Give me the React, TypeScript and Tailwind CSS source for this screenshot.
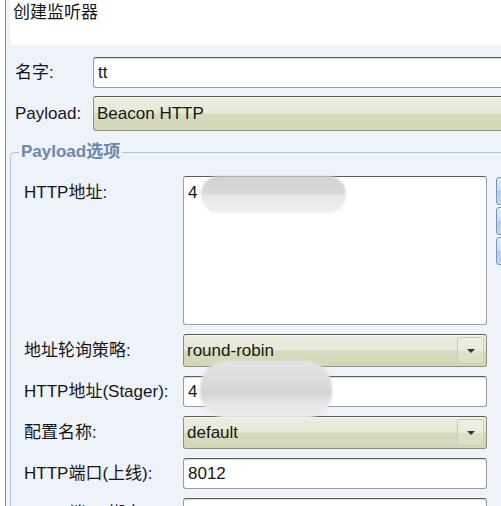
import React from "react";

const font = { fontFamily: '"Liberation Sans", "Noto Sans CJK SC", sans-serif' };

function TextBox({ value, className = "" }: { value: string; className?: string }) {
  return (
    <div
      className={`relative flex h-[31px] items-center rounded-[3px] border border-[#9a9a9a] border-t-[#5c5c5c] bg-white pl-[4px] shadow-[inset_0_1px_1px_rgba(0,0,0,0.15)] ${className}`}
    >
      {value}
    </div>
  );
}

function Select({ value, arrow = true, className = "" }: { value: string; arrow?: boolean; className?: string }) {
  return (
    <div
      className={`flex items-stretch rounded-[3px] border border-[#8e9080] border-t-[#5a5c50] bg-[linear-gradient(to_bottom,#ebeee0_0%,#e6e9d8_48%,#d7dbbe_52%,#d3d8b8_100%)] shadow-[inset_0_1px_0_rgba(255,255,255,0.6)] ${className}`}
    >
      <div className="flex flex-1 items-center pl-[3px]">{value}</div>
      {arrow && (
        <div className="my-[2px] mr-[2px] flex w-[27px] items-center justify-center rounded-[2px] border border-[#c9cdb5] bg-[linear-gradient(to_bottom,#eef0e4_0%,#e9ecdc_50%,#dde1c8_52%,#dadfc4_100%)]">
          <div className="h-0 w-0 border-x-[4px] border-t-[4px] border-x-transparent border-t-[#333]" />
        </div>
      )}
    </div>
  );
}

function SideButton() {
  return (
    <div className="h-[28px] w-[20px] rounded-[3px] border border-[#7896bb] bg-[linear-gradient(to_bottom,#e3ecf6_0%,#cddcec_50%,#b7cbe2_52%,#c6d6e8_100%)]" />
  );
}

export default function App() {
  return (
    <div className="flex h-[506px] w-[501px] overflow-hidden bg-white text-[17px] leading-[22px] text-[#161616]" style={font}>
      <div className="w-[5px] shrink-0 bg-white" />
      <div className="w-px shrink-0 bg-[#8a8a8a]" />
      <div className="min-w-0 flex-1 overflow-hidden bg-[#eef2f9] pl-[4px]">
        {/* title */}
        <div className="h-[45px] bg-white pl-[3px] pt-[2px]">创建监听器</div>

        {/* name */}
        <div className="mt-[12px] flex items-center pl-[5px]">
          <div className="w-[78px] shrink-0">名字:</div>
          <TextBox value="tt" className="w-[440px] shrink-0" />
        </div>

        {/* payload */}
        <div className="mt-[8px] flex items-center pl-[5px]">
          <div className="w-[78px] shrink-0">Payload:</div>
          <Select value="Beacon HTTP" arrow={false} className="h-[35px] w-[440px] shrink-0" />
        </div>

        {/* options */}
        <fieldset className="mt-[10px] rounded-tl-[5px] border-l border-t border-[#b3c3da] pl-[13px] pt-[13px]">
          <legend className="-ml-[5px] px-[2px] font-bold text-[#6d87ae]">Payload选项</legend>

          <div className="flex flex-col gap-[9px]">
            <div className="flex items-start">
              <div className="w-[159px] shrink-0 pt-[6px]">HTTP地址:</div>
              <div className="relative h-[149px] w-[304px] shrink-0 rounded-[3px] border border-[#a0a0a0] border-t-[#5c5c5c] bg-white pl-[4px] pt-[5px]">
                4
                <div className="absolute left-[17px] top-[-1px] h-[37px] w-[145px] rounded-[18px] bg-[linear-gradient(to_bottom,#d3d3d6_0%,#d8d8da_48%,#e8e8e9_52%,#efefef_100%)] blur-[1px]" />
              </div>
              <div className="ml-[9px] flex shrink-0 flex-col gap-[2px] pt-[1px]">
                <SideButton />
                <SideButton />
                <SideButton />
              </div>
            </div>

            <div className="flex items-center">
              <div className="w-[159px] shrink-0">地址轮询策略:</div>
              <Select value="round-robin" className="h-[33px] w-[304px] shrink-0" />
            </div>

            <div className="flex items-center">
              <div className="w-[159px] shrink-0">HTTP地址(Stager):</div>
              <div className="relative w-[304px] shrink-0">
                <TextBox value="4" />
                <div className="absolute left-[17px] top-[-15px] h-[57px] w-[132px] rounded-[26px] bg-[linear-gradient(to_bottom,#e4e4e5_0%,#dadadb_40%,#d4d4d5_55%,#e6e6e6_75%,#ececec_100%)] blur-[1px]" />
              </div>
            </div>

            <div className="flex items-center">
              <div className="w-[159px] shrink-0">配置名称:</div>
              <Select value="default" className="h-[33px] w-[304px] shrink-0" />
            </div>

            <div className="flex items-center">
              <div className="w-[159px] shrink-0">HTTP端口(上线):</div>
              <TextBox value="8012" className="w-[304px] shrink-0" />
            </div>

            <div className="flex items-center">
              <div className="w-[159px] shrink-0">HTTP端口(绑定):</div>
              <TextBox value="" className="w-[304px] shrink-0" />
            </div>
          </div>
        </fieldset>
      </div>
    </div>
  );
}
